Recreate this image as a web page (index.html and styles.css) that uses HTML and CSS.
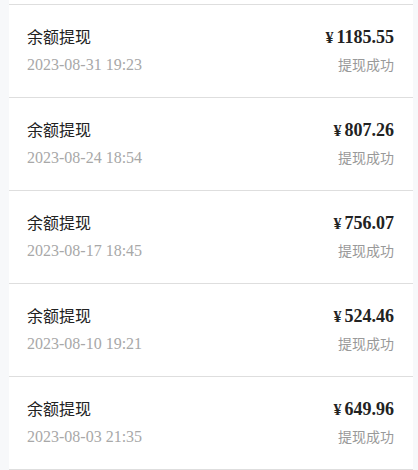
FILE: index.html
```html
<!doctype html>
<html>
	<head>
		<meta charset="utf-8" />
		<title>提现记录</title>
		<link rel="stylesheet" href="styles.css">
	</head>
	<body>
		<main class="list">
			<div class="item">
				<div class="row">
					<span class="title">余额提现</span>
					<span class="amount"><span class="yen">¥</span>1185.55</span>
				</div>
				<div class="row">
					<span class="date">2023-08-31 19:23</span>
					<span class="status">提现成功</span>
				</div>
			</div>
			<div class="item">
				<div class="row">
					<span class="title">余额提现</span>
					<span class="amount"><span class="yen">¥</span>807.26</span>
				</div>
				<div class="row">
					<span class="date">2023-08-24 18:54</span>
					<span class="status">提现成功</span>
				</div>
			</div>
			<div class="item">
				<div class="row">
					<span class="title">余额提现</span>
					<span class="amount"><span class="yen">¥</span>756.07</span>
				</div>
				<div class="row">
					<span class="date">2023-08-17 18:45</span>
					<span class="status">提现成功</span>
				</div>
			</div>
			<div class="item">
				<div class="row">
					<span class="title">余额提现</span>
					<span class="amount"><span class="yen">¥</span>524.46</span>
				</div>
				<div class="row">
					<span class="date">2023-08-10 19:21</span>
					<span class="status">提现成功</span>
				</div>
			</div>
			<div class="item">
				<div class="row">
					<span class="title">余额提现</span>
					<span class="amount"><span class="yen">¥</span>649.96</span>
				</div>
				<div class="row">
					<span class="date">2023-08-03 21:35</span>
					<span class="status">提现成功</span>
				</div>
			</div>
		</main>
	</body>
</html>
```

FILE: styles.css
```css
body {
	margin: 0;
	background: #f7f8fa;
	font-family: "Liberation Serif", "Noto Sans CJK SC", serif;
}

.list {
	margin: 0 5px 0 9px;
	padding-top: 4px;
	background: #fff;
}

.item {
	border-top: 1px solid #dedede;
	padding: 19px 19px 21px 18px;
}

.item:last-child {
	border-bottom: 1px solid #dedede;
}

.row {
	display: flex;
	justify-content: space-between;
	align-items: baseline;
	height: 24px;
	line-height: 24px;
}

.row + .row {
	margin-top: 4px;
}

.title {
	font-family: "Noto Sans CJK SC", sans-serif;
	font-size: 16px;
	color: #222;
}

.amount {
	font-weight: bold;
	font-size: 18px;
	color: #222;
}

.yen {
	font-size: 16px;
	margin-right: 3px;
}

.date {
	font-size: 16px;
	color: #a8a8a8;
}

.status {
	font-family: "Noto Sans CJK SC", sans-serif;
	font-size: 14px;
	color: #999;
}
```
